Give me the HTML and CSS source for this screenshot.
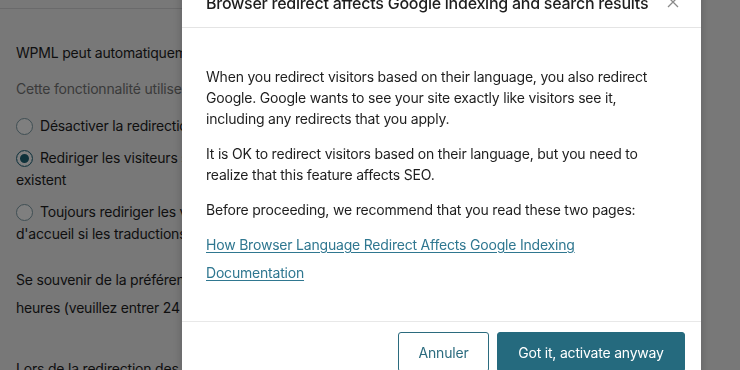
FILE: index.html
```html
<!DOCTYPE html>
<html lang="fr">
<head>
  <meta charset="UTF-8" />
  <meta name="viewport" content="width=device-width, initial-scale=1.0"/>
  <title>Redirection du navigateur</title>
  <link rel="stylesheet" href="styles.css">
</head>
<body>
  <div class="page">
    <div class="settings">
      <p class="lead">WPML peut automatiquement rediriger les visiteurs selon la langue du navigateur.</p>
      <p class="hint">Cette fonctionnalité utilise JavaScript et les cookies du navigateur.</p>
      <p class="option"><span class="radio"></span>Désactiver la redirection automatique selon la langue du navigateur</p>
      <p class="option"><span class="radio checked"></span>Rediriger les visiteurs selon la langue du navigateur uniquement si les traductions<br>existent</p>
      <p class="option"><span class="radio"></span>Toujours rediriger les visiteurs selon la langue du navigateur (rediriger vers la page<br>d'accueil si les traductions sont manquantes)</p>
      <p class="remember">Se souvenir de la préférence de langue du visiteur pendant 24<br>heures (veuillez entrer 24 heures ou moins)</p>
      <p class="next">Lors de la redirection des pages</p>
    </div>
  </div>

  <div class="overlay">
    <div class="modal">
      <div class="modal-header">
        <h2>Browser redirect affects Google indexing and search results</h2>
        <button class="close" title="Fermer">
          <svg width="12" height="12" viewBox="0 0 12 12"><path d="M1 1 L11 11 M11 1 L1 11" stroke="#8a8a8a" stroke-width="1.3" fill="none"/></svg>
        </button>
      </div>
      <div class="modal-body">
        <p>When you redirect visitors based on their language, you also redirect Google. Google wants to see your site exactly like visitors see it, including any redirects that you apply.</p>
        <p>It is OK to redirect visitors based on their language, but you need to realize that this feature affects SEO.</p>
        <p>Before proceeding, we recommend that you read these two pages:</p>
        <ul class="links">
          <li><a href="#">How Browser Language Redirect Affects Google Indexing</a></li>
          <li><a href="#">Documentation</a></li>
        </ul>
      </div>
      <div class="modal-footer">
        <button class="btn btn-secondary">Annuler</button>
        <button class="btn btn-primary">Got it, activate anyway</button>
      </div>
    </div>
  </div>
</body>
</html>
```

FILE: styles.css
```css
* {
  box-sizing: border-box;
  margin: 0;
  padding: 0;
}

body {
  font-family: Inter, "Liberation Sans", sans-serif;
  background: #f0f0f1;
  color: #1e1e1e;
  font-size: 14px;
  letter-spacing: -0.2px;
  overflow: hidden;
}

.page {
  padding-top: 8px;
}

.settings {
  border-top: 1px solid #d4d4d6;
  padding: 33px 16px;
  width: 680px;
  line-height: 22px;
}

.lead {
  margin-bottom: 14px;
}

.hint {
  color: #757575;
  margin-bottom: 15px;
}

.option {
  margin-bottom: 10px;
}

.radio {
  display: inline-block;
  width: 17px;
  height: 17px;
  border: 1px solid #7e9ca6;
  border-radius: 50%;
  background: #fff;
  vertical-align: -4px;
  margin-right: 7px;
}

.radio.checked {
  border-color: #2b6c80;
  box-shadow: inset 0 0 0 3px #fff, inset 0 0 0 8px #1f6477;
}

.remember {
  margin-top: 21px;
  line-height: 28px;
}

.next {
  margin-top: 36px;
}

/* Modal */
.overlay {
  position: fixed;
  inset: 0;
  background: rgba(0, 0, 0, 0.5);
}

.modal {
  position: absolute;
  left: 182px;
  top: -21px;
  width: 519px;
  background: #fff;
  box-shadow: 0 2px 10px rgba(0, 0, 0, 0.2);
}

.modal-header {
  display: flex;
  align-items: center;
  justify-content: space-between;
  padding: 12px 24px;
  border-bottom: 1px solid #e4e4e4;
}

.modal-header h2 {
  font-size: 16px;
  font-weight: 500;
  line-height: 24px;
  letter-spacing: -0.25px;
  color: #1e1e1e;
}

.close {
  border: none;
  background: none;
  display: flex;
  margin-right: -2px;
  margin-top: -2px;
}

.modal-body {
  padding: 24px;
}

.modal-body p {
  margin: 14px 0;
  line-height: 21px;
  color: #1e1e1e;
}

.links {
  list-style: none;
  margin: 11px 0 14px;
  line-height: 21px;
}

.links li + li {
  margin-top: 7px;
}

.links a {
  color: #2f7790;
  text-decoration: underline;
  text-underline-offset: 2px;
}

.modal-footer {
  display: flex;
  justify-content: flex-end;
  gap: 8px;
  padding: 10px 16px 16px;
  border-top: 1px solid #e8e8e8;
}

.btn {
  font-family: inherit;
  font-size: 14px;
  letter-spacing: -0.2px;
  height: 40px;
  padding: 0;
  border-radius: 3px;
  white-space: nowrap;
  cursor: pointer;
}

.btn-secondary {
  width: 91px;
  background: #fff;
  color: #2b6b7e;
  border: 1px solid #2b6b7e;
}

.btn-primary {
  width: 188px;
  background: #256a7e;
  color: #fff;
  border: 1px solid #256a7e;
}
```
